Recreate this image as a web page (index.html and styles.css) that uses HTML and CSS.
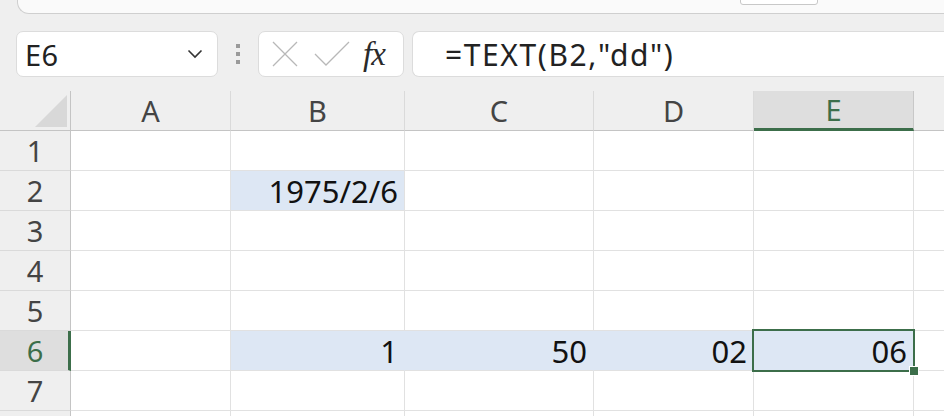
FILE: index.html
```html
<!DOCTYPE html>
<html lang="ja">
<head>
  <meta charset="UTF-8">
  <title>Book1 - Excel</title>
  <link rel="stylesheet" href="styles.css">
</head>
<body>
  <div class="ribbon-edge">
    <div class="ribbon-btn"></div>
  </div>

  <div class="formula-row">
    <div class="name-box">
      <span class="name-text">E6</span>
      <svg class="chevron" width="16" height="10" viewBox="0 0 16 10">
        <path d="M1.5 1.5 L8 8 L14.5 1.5" fill="none" stroke="#333" stroke-width="1.6"/>
      </svg>
    </div>
    <div class="grip">
      <span></span><span></span><span></span>
    </div>
    <div class="fx-box">
      <svg width="28" height="26" viewBox="0 0 28 26">
        <path d="M2 1 L26 25 M26 1 L2 25" stroke="#b8b8b8" stroke-width="1.3" fill="none"/>
      </svg>
      <svg width="36" height="26" viewBox="0 0 36 26">
        <path d="M1 13 L12 24 L35 1" stroke="#b8b8b8" stroke-width="1.3" fill="none"/>
      </svg>
      <span class="fx">fx</span>
    </div>
    <div class="formula-box">=TEXT(B2,"dd")</div>
  </div>

  <div class="sheet">
    <div class="corner"><span class="corner-tri"></span></div>
    <div class="col-head">A</div>
    <div class="col-head">B</div>
    <div class="col-head">C</div>
    <div class="col-head">D</div>
    <div class="col-head active">E</div>
    <div class="col-head last"></div>

    <div class="row-head">1</div>
    <div class="cell"></div><div class="cell"></div><div class="cell"></div><div class="cell"></div><div class="cell"></div><div class="cell last"></div>

    <div class="row-head">2</div>
    <div class="cell"></div><div class="cell hl">1975/2/6</div><div class="cell"></div><div class="cell"></div><div class="cell"></div><div class="cell last"></div>

    <div class="row-head">3</div>
    <div class="cell"></div><div class="cell"></div><div class="cell"></div><div class="cell"></div><div class="cell"></div><div class="cell last"></div>

    <div class="row-head">4</div>
    <div class="cell"></div><div class="cell"></div><div class="cell"></div><div class="cell"></div><div class="cell"></div><div class="cell last"></div>

    <div class="row-head">5</div>
    <div class="cell"></div><div class="cell"></div><div class="cell"></div><div class="cell"></div><div class="cell"></div><div class="cell last"></div>

    <div class="row-head active">6</div>
    <div class="cell"></div><div class="cell hl joined">1</div><div class="cell hl joined">50</div><div class="cell hl">02</div>
    <div class="cell hl selected">06<span class="sel-frame"></span><span class="fill-handle"></span></div>
    <div class="cell last"></div>

    <div class="row-head">7</div>
    <div class="cell"></div><div class="cell"></div><div class="cell"></div><div class="cell"></div><div class="cell"></div><div class="cell last"></div>

    <div class="row-head"></div>
    <div class="cell"></div><div class="cell"></div><div class="cell"></div><div class="cell"></div><div class="cell"></div><div class="cell last"></div>
  </div>
</body>
</html>
```

FILE: styles.css
```css
body {
  margin: 0;
  width: 944px;
  height: 416px;
  overflow: hidden;
  background: #efefef;
  font-family: "Noto Sans", "Noto Sans CJK JP", sans-serif;
  color: #222;
}

.ribbon-edge {
  position: relative;
  height: 14px;
  margin-left: 17px;
  background: #fafafa;
  border: 1px solid #cfcfcf;
  border-top: none;
  border-right: none;
  border-radius: 0 0 0 12px;
  box-sizing: border-box;
}

.ribbon-btn {
  position: absolute;
  left: 722px;
  top: -4px;
  width: 76px;
  height: 7px;
  border: 1px solid #c8c8c8;
  border-radius: 3px;
  background: #fff;
}

.formula-row {
  display: flex;
  align-items: stretch;
  height: 46px;
  margin: 17px 0 14px 16px;
}

.name-box {
  width: 202px;
  box-sizing: border-box;
  display: flex;
  align-items: center;
  justify-content: space-between;
  padding: 0 14px 0 8px;
  background: #fff;
  border: 1px solid #dcdcdc;
  border-radius: 7px;
}

.name-text {
  font-size: 29px;
  letter-spacing: 0.5px;
  color: #222;
}

.grip {
  width: 40px;
  display: flex;
  flex-direction: column;
  align-items: center;
  justify-content: center;
  gap: 4px;
}

.grip span {
  width: 4px;
  height: 4px;
  background: #9a9a9a;
}

.fx-box {
  width: 146px;
  box-sizing: border-box;
  display: flex;
  align-items: center;
  gap: 15px;
  padding-left: 12px;
  background: #fff;
  border: 1px solid #dcdcdc;
  border-radius: 7px;
}

.fx {
  font-family: "Liberation Serif", serif;
  font-style: italic;
  font-size: 33px;
  color: #2a2a2a;
  margin-left: -2px;
  letter-spacing: -1px;
}

.formula-box {
  flex: 1;
  margin-left: 8px;
  padding-left: 32px;
  display: flex;
  align-items: center;
  background: #fff;
  border: 1px solid #dcdcdc;
  border-right: none;
  border-radius: 7px 0 0 7px;
  font-size: 30px;
  color: #222;
  letter-spacing: 1.6px;
}

.sheet {
  display: grid;
  grid-template-columns: 71px 160px 174px 189px 160px 160px 1fr;
  grid-auto-rows: 40px;
}

.corner {
  position: relative;
  border-right: 1px solid #c4c4c4;
  border-bottom: 1px solid #c4c4c4;
}

.corner-tri {
  position: absolute;
  right: 3px;
  bottom: 3px;
  width: 0;
  height: 0;
  border-left: 32px solid transparent;
  border-bottom: 32px solid #d8d8d8;
}

.col-head {
  display: flex;
  align-items: center;
  justify-content: center;
  font-size: 29px;
  color: #444;
  border-right: 1px solid #dadada;
  border-bottom: 1px solid #c4c4c4;
}

.col-head.active {
  background: #dedede;
  color: #3c6e4a;
  border-bottom: 3px solid #3c6e4a;
  border-right-color: #c8c8c8;
}

.col-head.last {
  border-right: none;
}

.row-head {
  display: flex;
  align-items: center;
  justify-content: center;
  font-size: 29px;
  color: #444;
  border-right: 1px solid #c4c4c4;
  border-bottom: 1px solid #dadada;
}

.row-head.active {
  background: #dedede;
  color: #3c6e4a;
  border-right: 3px solid #3c6e4a;
  padding-left: 2px;
}

.cell {
  position: relative;
  display: flex;
  align-items: center;
  justify-content: flex-end;
  padding-right: 6px;
  background: #fff;
  border-right: 1px solid #e1e1e1;
  border-bottom: 1px solid #e1e1e1;
  font-size: 31px;
  color: #111;
}

.cell.last {
  border-right: none;
}

.cell.hl {
  background: #dde7f4;
}

.cell.joined {
  border-right-color: #dde7f4;
}

.cell.selected {
  z-index: 2;
}

.sel-frame {
  position: absolute;
  left: -2px;
  top: -2px;
  right: -2px;
  bottom: -2px;
  border: 2px solid #3c6e4a;
}

.fill-handle {
  position: absolute;
  right: -6px;
  bottom: -6px;
  width: 8px;
  height: 8px;
  background: #3c6e4a;
  border: 1px solid #fff;
}
```
